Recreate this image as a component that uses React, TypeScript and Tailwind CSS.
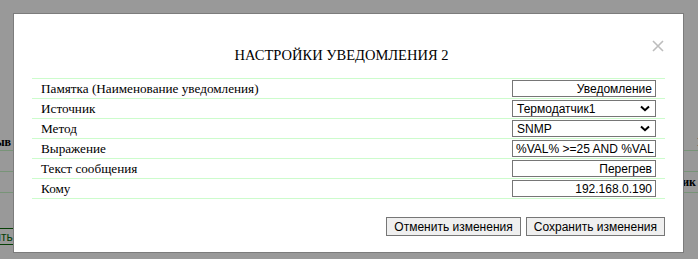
const rows = [
  { label: "Памятка (Наименование уведомления)", kind: "input", value: "Уведомление", align: "right" },
  { label: "Источник", kind: "select", value: "Термодатчик1" },
  { label: "Метод", kind: "select", value: "SNMP" },
  { label: "Выражение", kind: "input", value: "%VAL% >=25 AND %VAL", align: "left" },
  { label: "Текст сообщения", kind: "input", value: "Перегрев", align: "right" },
  { label: "Кому", kind: "input", value: "192.168.0.190", align: "right" },
];

function Chevron() {
  return (
    <svg width="10" height="7" viewBox="0 0 10 7" className="shrink-0">
      <path d="M1 1.5 L5 5.2 L9 1.5" fill="none" stroke="#000" strokeWidth="2" />
    </svg>
  );
}

export default function App() {
  return (
    <div className="relative h-[259px] w-[698px] overflow-hidden bg-white font-['Liberation_Serif',serif] text-black">
      {/* page behind the dialog */}
      <div className="pt-[134px]">
        <div className="flex h-[17px] items-center justify-between border-b border-[#c8f7c8] text-[12px] font-bold leading-none">
          <span className="-ml-[27px]">Вызыв</span>
          <span className="mr-[-10px]">Ia</span>
        </div>
        <div className="h-[21px] border-b border-[#c8f7c8]" />
        <div className="flex h-[21px] items-center justify-end border-b border-[#c8f7c8] text-[12px] font-bold">
          <span className="mr-[2px]">Дик</span>
        </div>
        <div className="mt-[35px] flex">
          <div className="-ml-[52px] flex h-[17px] items-center border border-[#0a6b0a] bg-white px-[4px] font-['Liberation_Sans',sans-serif] text-[12px] text-[#0a6b0a]">
            Сохранить
          </div>
        </div>
      </div>

      <div className="absolute inset-0 bg-black/40" />

      {/* dialog */}
      <div className="absolute left-[13px] top-[13px] h-[240px] w-[671px] border border-[#7c7c7c] bg-white px-[18px]">
        <div className="pr-[14px] pt-[31px] text-center text-[14.5px] leading-[20px]">
          НАСТРОЙКИ УВЕДОМЛЕНИЯ 2
        </div>
        <svg
          width="12"
          height="12"
          viewBox="0 0 12 12"
          className="absolute left-[638px] top-[26px]"
        >
          <path d="M1 1 L11 11 M11 1 L1 11" stroke="#bdbdbd" strokeWidth="1.6" />
        </svg>

        <div className="mt-[13px] border-b border-[#ccfccc]">
          {rows.map((r) => (
            <div
              key={r.label}
              className="flex h-[20px] items-center justify-between border-t border-[#ccfccc] pl-[9px] pr-[9px] text-[13.2px]"
            >
              <span className="leading-none">{r.label}</span>
              {r.kind === "input" ? (
                <div
                  className={
                    "flex h-[17px] w-[144px] items-center overflow-hidden whitespace-nowrap border border-[#767676] px-[3px] font-['Liberation_Sans',sans-serif] text-[12px] leading-none " +
                    (r.align === "right" ? "justify-end" : "justify-start")
                  }
                >
                  {r.value}
                </div>
              ) : (
                <div className="flex h-[17px] w-[144px] items-center justify-between border border-[#767676] pl-[4px] pr-[5px] font-['Liberation_Sans',sans-serif] text-[12px] leading-none">
                  <span>{r.value}</span>
                  <Chevron />
                </div>
              )}
            </div>
          ))}
        </div>

        <div className="mt-[18px] flex justify-end gap-[5px] font-['Liberation_Sans',sans-serif] text-[12px]">
          <button className="h-[19px] border border-[#767676] bg-[#efefef] px-[7px] leading-none">
            Отменить изменения
          </button>
          <button className="h-[19px] border border-[#767676] bg-[#efefef] px-[7px] leading-none">
            Сохранить изменения
          </button>
        </div>
      </div>
    </div>
  );
}
